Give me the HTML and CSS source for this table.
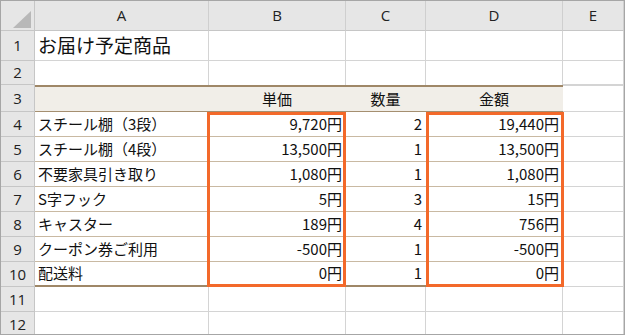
FILE: index.html
```html
<!DOCTYPE html>
<html lang="ja">
<head>
<meta charset="utf-8">
<title>お届け予定商品</title>
<link rel="stylesheet" href="styles.css">
</head>
<body>
<div class="sheet">
  <div class="corner"><span class="tri"></span></div>
  <div class="ch">A</div>
  <div class="ch">B</div>
  <div class="ch">C</div>
  <div class="ch">D</div>
  <div class="ch">E</div>

  <div class="rh">1</div>
  <div class="c title">お届け予定商品</div>
  <div class="c"></div>
  <div class="c"></div>
  <div class="c"></div>
  <div class="c"></div>

  <div class="rh">2</div>
  <div class="c pre"></div>
  <div class="c pre"></div>
  <div class="c pre"></div>
  <div class="c pre"></div>
  <div class="c pre-e"></div>

  <div class="rh">3</div>
  <div class="c th"></div>
  <div class="c th ctr">単価</div>
  <div class="c th ctr">数量</div>
  <div class="c th ctr">金額</div>
  <div class="c th-e"></div>

  <div class="rh">4</div>
  <div class="c td">スチール棚（3段）</div>
  <div class="c td num">9,720円</div>
  <div class="c td num">2</div>
  <div class="c td num">19,440円</div>
  <div class="c"></div>

  <div class="rh">5</div>
  <div class="c td">スチール棚（4段）</div>
  <div class="c td num">13,500円</div>
  <div class="c td num">1</div>
  <div class="c td num">13,500円</div>
  <div class="c"></div>

  <div class="rh">6</div>
  <div class="c td">不要家具引き取り</div>
  <div class="c td num">1,080円</div>
  <div class="c td num">1</div>
  <div class="c td num">1,080円</div>
  <div class="c"></div>

  <div class="rh">7</div>
  <div class="c td">S字フック</div>
  <div class="c td num">5円</div>
  <div class="c td num">3</div>
  <div class="c td num">15円</div>
  <div class="c"></div>

  <div class="rh">8</div>
  <div class="c td">キャスター</div>
  <div class="c td num">189円</div>
  <div class="c td num">4</div>
  <div class="c td num">756円</div>
  <div class="c"></div>

  <div class="rh">9</div>
  <div class="c td">クーポン券ご利用</div>
  <div class="c td num">-500円</div>
  <div class="c td num">1</div>
  <div class="c td num">-500円</div>
  <div class="c"></div>

  <div class="rh">10</div>
  <div class="c td last">配送料</div>
  <div class="c td last num">0円</div>
  <div class="c td last num">1</div>
  <div class="c td last num">0円</div>
  <div class="c"></div>

  <div class="rh">11</div>
  <div class="c"></div>
  <div class="c"></div>
  <div class="c"></div>
  <div class="c"></div>
  <div class="c"></div>

  <div class="rh">12</div>
  <div class="c"></div>
  <div class="c"></div>
  <div class="c"></div>
  <div class="c"></div>
  <div class="c"></div>

  <div class="hl hl-b"></div>
  <div class="hl hl-d"></div>
</div>
</body>
</html>
```

FILE: styles.css
```css
* { box-sizing: border-box; }
html, body { margin: 0; padding: 0; background: #ffffff; }

.sheet {
  position: relative;
  width: 625px;
  height: 335px;
  overflow: hidden;
  border: 1px solid #a6a6a6;
  display: grid;
  grid-template-columns: 34px 174px 137px 80px 137px 61px;
  grid-template-rows: 30px 30px 24px 27px repeat(9, 25px);
  font-family: "Noto Sans CJK JP", "Noto Sans", sans-serif;
  font-size: 15px;
  color: #111;
}

.corner {
  background: #e6e6e6;
  border-right: 1px solid #c6c6c6;
  border-bottom: 1px solid #c6c6c6;
  position: relative;
}
.tri {
  position: absolute;
  left: 12px;
  top: 10px;
  width: 18px;
  height: 17px;
  background: #b8b8b8;
  clip-path: polygon(100% 0, 100% 100%, 0 100%);
}

.ch {
  background: #e6e6e6;
  border-right: 1px solid #cfcfcf;
  border-bottom: 1px solid #c6c6c6;
  display: flex;
  align-items: center;
  justify-content: center;
  padding-bottom: 2px;
  color: #222;
  font-family: "Open Sans", "Noto Sans", sans-serif;
  font-size: 15px;
}
.ch:last-of-type { border-right: 0; }

.rh {
  background: #e6e6e6;
  border-right: 1px solid #c6c6c6;
  border-bottom: 1px solid #c6c6c6;
  display: flex;
  align-items: center;
  justify-content: center;
  padding-bottom: 1px;
  color: #222;
  font-family: "Open Sans", "Noto Sans", sans-serif;
  font-size: 15px;
}

.c {
  border-right: 1px solid #d4d4d4;
  border-bottom: 1px solid #d4d4d4;
  display: flex;
  align-items: center;
  padding: 0 4px 2px 3px;
  white-space: nowrap;
}

.title {
  font-size: 19px;
  padding-bottom: 3px;
}

.pre { border-bottom: 0; }
.pre-e { border-bottom: 1px solid #d4d4d4; }

.th {
  background: #f1eee8;
  border-top: 2px solid #9f8767;
  border-bottom: 1px solid #a58f70;
  border-right: 0;
}
.th-e { border-top: 1px solid #d4d4d4; }

.ctr { justify-content: center; }

.td {
  border-right: 0;
  border-bottom: 1px solid #c9b9a2;
}
.td.last { border-bottom: 2px solid #9f8767; }

.num { justify-content: flex-end; }

.hl {
  position: absolute;
  top: 0;
  bottom: 0;
  border: 3px solid #f3692a;
  pointer-events: none;
}
.hl-b {
  grid-column: 3 / 4;
  grid-row: 5 / 12;
  left: -2px;
  right: 0;
}
.hl-d {
  grid-column: 5 / 6;
  grid-row: 5 / 12;
  left: 0;
  right: -1px;
}
```
